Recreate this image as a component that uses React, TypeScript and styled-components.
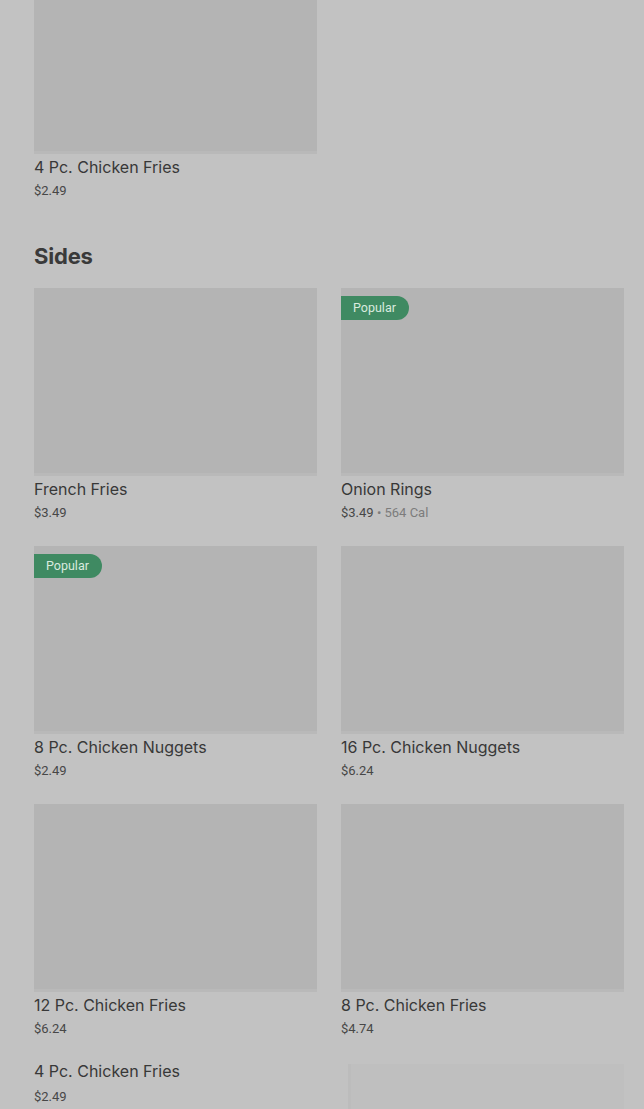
import React from 'react'
import styled, { createGlobalStyle } from 'styled-components'

const GlobalStyle = createGlobalStyle`
    html, body {
        margin: 0;
        padding: 0;
        background: #c2c2c2;
        font-family: Inter, Roboto, "Liberation Sans", Arial, sans-serif;
    }
`

const Page = styled.main`
    width: 644px;
    height: 1109px;
    overflow: hidden;
    padding: 0 20px 0 34px;
    box-sizing: border-box;
    background: #c2c2c2;
`

const Scroller = styled.div`
    margin-top: -34px;
`

const Section = styled.section`
    margin-bottom: 41px;
`

const SectionTitle = styled.h2`
    margin: 0 0 18px;
    font-size: 22px;
    line-height: 28px;
    font-weight: 700;
    letter-spacing: -0.2px;
    color: #3a3a3a;
`

const Grid = styled.div`
    display: grid;
    grid-template-columns: 283px 283px;
    column-gap: 24px;
    row-gap: 23px;
`

const Card = styled.div`
    display: flex;
    flex-direction: column;
    position: relative;
`

const Thumb = styled.div<{ $ghost?: boolean }>`
    height: 188px;
    background: ${p => (p.$ghost ? '#bfbfbf' : '#b4b4b4')};
    border-bottom: 3px solid ${p => (p.$ghost ? '#bfbfbf' : '#b9b9b9')};
    box-sizing: border-box;
    ${p => p.$ghost && 'margin: 2px 0 0 7px; border-left: 3px solid #bcbcbc;'}
`

const Badge = styled.span`
    position: absolute;
    top: 8px;
    left: 0;
    height: 24px;
    line-height: 24px;
    padding: 0 13px 0 12px;
    border-radius: 0 12px 12px 0;
    background: #3f8a62;
    color: #d9eadf;
    font-family: Roboto, "Liberation Sans", Arial, sans-serif;
    font-size: 12.5px;
`

const Name = styled.div<{ $bare?: boolean }>`
    margin-top: ${p => (p.$bare ? '-2px' : '2px')};
    font-size: 16px;
    line-height: 22px;
    color: #383838;
`

const Meta = styled.div<{ $bare?: boolean }>`
    margin-top: ${p => (p.$bare ? '5px' : '3px')};
    font-family: Roboto, "Liberation Sans", Arial, sans-serif;
    font-size: 13px;
    line-height: 20px;
    color: #474747;
`

const Cal = styled.span`
    color: #7c7c7c;
`

type Item = {
    name: string
    price: string
    cal?: string
    popular?: boolean
    noImage?: boolean
}

const sides: Item[] = [
    { name: 'French Fries', price: '$3.49' },
    { name: 'Onion Rings', price: '$3.49', cal: '564 Cal', popular: true },
    { name: '8 Pc. Chicken Nuggets', price: '$2.49', popular: true },
    { name: '16 Pc. Chicken Nuggets', price: '$6.24' },
    { name: '12 Pc. Chicken Fries', price: '$6.24' },
    { name: '8 Pc. Chicken Fries', price: '$4.74' },
    { name: '4 Pc. Chicken Fries', price: '$2.49', noImage: true },
]

const MenuCard = ({ item }: { item: Item }) => (
    <Card>
        {!item.noImage && <Thumb />}
        {item.popular && <Badge>Popular</Badge>}
        <Name $bare={item.noImage}>{item.name}</Name>
        <Meta $bare={item.noImage}>
            {item.price}
            {item.cal && <Cal> • {item.cal}</Cal>}
        </Meta>
    </Card>
)

const App = () => (
    <Page>
        <GlobalStyle />
        <Scroller>
            <Section>
                <Grid>
                    <MenuCard item={{ name: '4 Pc. Chicken Fries', price: '$2.49' }} />
                </Grid>
            </Section>
            <SectionTitle>Sides</SectionTitle>
            <Grid>
                {sides.map(item => (
                    <MenuCard key={item.name + item.price} item={item} />
                ))}
                <Card>
                    <Thumb $ghost />
                </Card>
            </Grid>
        </Scroller>
    </Page>
)

export default App
